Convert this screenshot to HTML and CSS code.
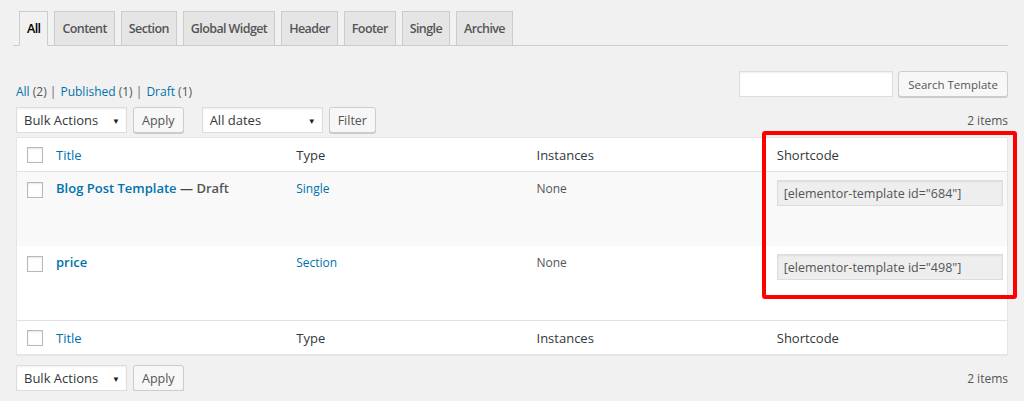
FILE: index.html
```html
<!DOCTYPE html>
<html lang="en">
<head>
    <meta charset="UTF-8">
    <title>Templates</title>
    <link rel="stylesheet" href="styles.css">
</head>
<body>
    <div class="wrap">
        <nav class="nav-tabs">
            <a class="nav-tab active" href="#">All</a>
            <a class="nav-tab" href="#">Content</a>
            <a class="nav-tab" href="#">Section</a>
            <a class="nav-tab" href="#">Global Widget</a>
            <a class="nav-tab" href="#">Header</a>
            <a class="nav-tab" href="#">Footer</a>
            <a class="nav-tab" href="#">Single</a>
            <a class="nav-tab" href="#">Archive</a>
        </nav>

        <div class="top-row">
            <ul class="subsubsub">
                <li><a href="#">All <span class="count">(2)</span></a> |</li>
                <li><a href="#">Published <span class="count">(1)</span></a> |</li>
                <li><a href="#">Draft <span class="count">(1)</span></a></li>
            </ul>
            <div class="search-box">
                <input type="text" class="search-input">
                <button class="button">Search Template</button>
            </div>
        </div>

        <div class="tablenav">
            <div class="actions">
                <div class="select bulk">Bulk Actions <span class="arrow">▼</span></div>
                <button class="button">Apply</button>
                <div class="select dates">All dates <span class="arrow">▼</span></div>
                <button class="button">Filter</button>
            </div>
            <div class="num-items">2 items</div>
        </div>

        <div class="list-table">
            <div class="row head">
                <div class="cell check"><span class="checkbox"></span></div>
                <div class="cell"><a href="#">Title</a></div>
                <div class="cell">Type</div>
                <div class="cell">Instances</div>
                <div class="cell">Shortcode</div>
            </div>
            <div class="row item alt">
                <div class="cell check"><span class="checkbox"></span></div>
                <div class="cell"><strong><a href="#">Blog Post Template</a> — <span class="state">Draft</span></strong></div>
                <div class="cell"><a href="#">Single</a></div>
                <div class="cell muted">None</div>
                <div class="cell"><input class="shortcode" type="text" readonly value='[elementor-template id="684"]'></div>
            </div>
            <div class="row item">
                <div class="cell check"><span class="checkbox"></span></div>
                <div class="cell"><strong><a href="#">price</a></strong></div>
                <div class="cell"><a href="#">Section</a></div>
                <div class="cell muted">None</div>
                <div class="cell"><input class="shortcode" type="text" readonly value='[elementor-template id="498"]'></div>
            </div>
            <div class="row foot">
                <div class="cell check"><span class="checkbox"></span></div>
                <div class="cell"><a href="#">Title</a></div>
                <div class="cell">Type</div>
                <div class="cell">Instances</div>
                <div class="cell">Shortcode</div>
            </div>
        </div>

        <div class="tablenav bottom">
            <div class="actions">
                <div class="select bulk">Bulk Actions <span class="arrow">▼</span></div>
                <button class="button">Apply</button>
            </div>
            <div class="num-items">2 items</div>
        </div>
    </div>

    <!-- red highlight around the shortcode column -->
    <div class="highlight"></div>
</body>
</html>
```

FILE: styles.css
```css
body {
    margin: 0;
    background: #f1f1f1;
    font-family: 'Open Sans', 'Noto Sans', sans-serif;
    font-size: 12px;
    color: #444;
}

a {
    color: #0073aa;
    text-decoration: none;
}

.wrap {
    padding: 0 16px;
}

.nav-tabs {
    display: flex;
    margin: 11px 0 0 -3px;
    padding-left: 3px;
    border-bottom: 1px solid #ccc;
}

.nav-tab {
    margin-left: 6px;
    padding: 5px 7px 4px;
    line-height: 24px;
    font-size: 12.5px;
    font-weight: 600;
    letter-spacing: -0.6px;
    color: #555;
    background: #e5e5e5;
    border: 1px solid #ccc;
    border-bottom: none;
}

.nav-tab:first-child {
    margin-left: 3px;
}

.nav-tab.active {
    background: #f1f1f1;
    color: #000;
    border-bottom: 1px solid #f1f1f1;
    margin-bottom: -1px;
}

.top-row {
    display: flex;
    justify-content: space-between;
    align-items: flex-end;
    margin-top: 25px;
}

.subsubsub {
    list-style: none;
    margin: 0 0 -6px 0;
    padding: 0;
    display: flex;
    gap: 4px;
    color: #666;
    line-height: 22px;
}

.subsubsub .count {
    color: #555;
}

.search-box {
    display: flex;
    gap: 5px;
}

.search-input {
    width: 154px;
    height: 26px;
    box-sizing: border-box;
    border: 1px solid #ddd;
    box-shadow: inset 0 1px 2px rgba(0, 0, 0, 0.07);
    background: #fff;
    margin: 0;
}

.button {
    height: 26px;
    box-sizing: border-box;
    padding: 0 8px;
    font-family: inherit;
    font-size: 12px;
    color: #555;
    background: #f7f7f7;
    border: 1px solid #ccc;
    border-radius: 3px;
    box-shadow: 0 1px 0 #ccc;
    margin: 0;
    white-space: nowrap;
}

.search-box .button {
    width: 110px;
    padding: 0 6px;
    font-size: 11.5px;
}

.tablenav {
    display: flex;
    justify-content: space-between;
    align-items: center;
    height: 26px;
    margin-top: 10px;
}

.actions {
    display: flex;
    align-items: center;
}

.select {
    height: 26px;
    box-sizing: border-box;
    display: flex;
    align-items: center;
    justify-content: space-between;
    padding: 0 6px 0 7px;
    font-size: 13px;
    color: #32373c;
    background: #fff;
    border: 1px solid #ddd;
    box-shadow: inset 0 1px 2px rgba(0, 0, 0, 0.07);
}

.select .arrow {
    font-size: 8px;
    color: #222;
}

.select.bulk {
    width: 111px;
    margin-right: 6px;
}

.select.dates {
    width: 121px;
    margin: 0 6px 0 18px;
}

.actions .button {
    font-size: 12.5px;
}

.num-items {
    color: #555;
    font-size: 12px;
}

.list-table {
    margin-top: 4px;
    background: #fff;
    border: 1px solid #e5e5e5;
    box-shadow: 0 1px 1px rgba(0, 0, 0, 0.04);
}

.row {
    display: grid;
    grid-template-columns: 29px repeat(4, minmax(0, 1fr));
}

.row.head {
    height: 33px;
    align-items: center;
    border-bottom: 1px solid #e1e1e1;
    font-size: 13px;
    color: #32373c;
}

.row.foot {
    height: 33px;
    align-items: center;
    border-top: 1px solid #e1e1e1;
    font-size: 13px;
    color: #32373c;
}

.row.item {
    height: 74px;
    font-size: 12px;
}

.row.alt {
    background: #f9f9f9;
}

.cell {
    padding: 0 10px;
}

.row.item .cell {
    padding-top: 7px;
    line-height: 19px;
}

.cell.check {
    padding: 0 0 0 10px;
}

.row.item .cell.check {
    padding-top: 10px;
}

.checkbox {
    display: block;
    width: 16px;
    height: 16px;
    box-sizing: border-box;
    border: 1px solid #b4b9be;
    background: #fff;
    box-shadow: inset 0 1px 2px rgba(0, 0, 0, 0.1);
}

.row.item strong {
    font-size: 13px;
    font-weight: 600;
}

.state {
    color: #555;
}

.muted {
    color: #555;
}

.shortcode {
    display: block;
    width: 226px;
    height: 26px;
    box-sizing: border-box;
    margin: 1px 0 0 0;
    padding: 0 6px;
    font-family: inherit;
    font-size: 12.5px;
    color: #555;
    background: #eee;
    border: 1px solid #ddd;
    box-shadow: inset 0 1px 2px rgba(0, 0, 0, 0.07);
}

.tablenav.bottom {
    margin-top: 10px;
}

.highlight {
    position: absolute;
    left: 762px;
    top: 131px;
    width: 255px;
    height: 168px;
    box-sizing: border-box;
    border: 4px solid #ff0000;
    border-radius: 3px;
}
```
